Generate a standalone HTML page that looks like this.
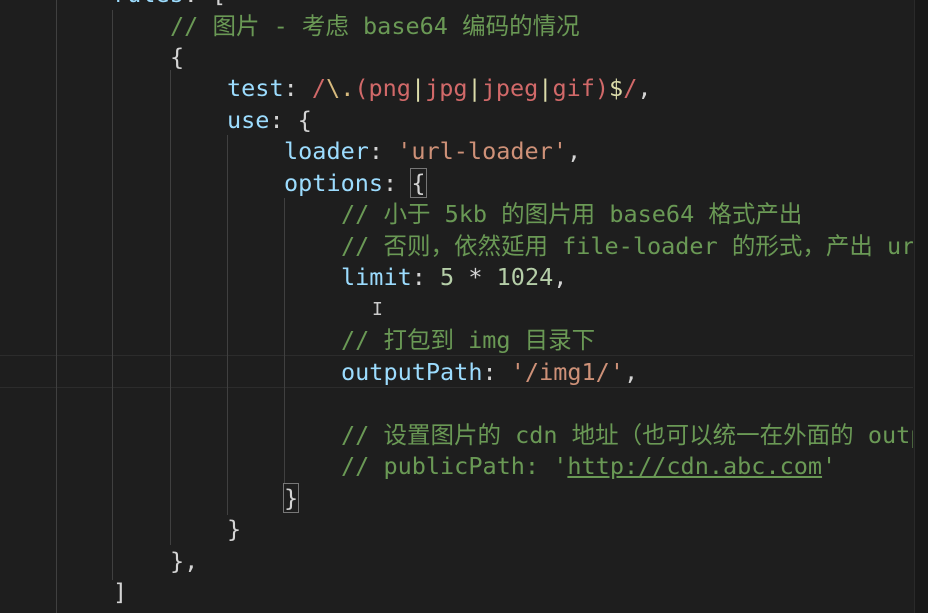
<!DOCTYPE html>
<html><head><meta charset="utf-8"><style>
html,body{margin:0;padding:0;}
body{width:928px;height:613px;background:#1e1e1e;position:relative;overflow:hidden;
font-family:"DejaVu Sans Mono","Noto Sans CJK SC",monospace;font-size:23.5px;color:#d4d4d4;}
.wrap{position:absolute;left:0;top:0;width:913px;height:613px;overflow:hidden;}
.l{position:absolute;height:31px;line-height:31px;white-space:pre;top:0;}
.c{color:#6a9955}.k{color:#9cdcfe}.s{color:#ce9178}.r{color:#d16969}.n{color:#b5cea8}.y{color:#dcdcaa}.e{color:#d7ba7d}
.g{position:absolute;width:1px;background:#404040;}
.mm{position:absolute;left:914px;top:0;width:14px;height:613px;background:#181818;border-left:1px solid #2a2a2a;}
.hl{position:absolute;left:0;width:913px;top:355px;height:31px;border-top:1px solid #2c2c2c;border-bottom:1px solid #2c2c2c;}
.bx{outline:1px solid #777;}
</style></head><body>
<div class="wrap">
<div class="hl"></div>
<div class="g" style="left:56px;top:0;height:613px"></div>
<div class="g" style="left:112px;top:10px;height:570px"></div>
<div class="g" style="left:170px;top:70px;height:475px"></div>
<div class="g" style="left:227px;top:135px;height:380px"></div>
<div class="g" style="left:284px;top:198px;height:285px"></div>
<div class="l" style="left:113px;top:-21px"><span class="k">rules</span>: [</div>
<div class="l" style="left:170px;top:11px"><span class="c">// 图片 - 考虑 base64 编码的情况</span></div>
<div class="l" style="left:170px;top:42px">{</div>
<div class="l" style="left:227px;top:73px"><span class="k">test</span>: <span class="r">/</span><span class="e">\.</span><span class="r">(png</span><span class="y">|</span><span class="r">jpg</span><span class="y">|</span><span class="r">jpeg</span><span class="y">|</span><span class="r">gif)</span><span class="y">$</span><span class="r">/</span>,</div>
<div class="l" style="left:227px;top:105px"><span class="k">use</span>: {</div>
<div class="l" style="left:284px;top:136px"><span class="k">loader</span>: <span class="s">'url-loader'</span>,</div>
<div class="l" style="left:284px;top:168px"><span class="k">options</span>: <span class="bx">{</span></div>
<div class="l" style="left:341px;top:199px"><span class="c">// 小于 5kb 的图片用 base64 格式产出</span></div>
<div class="l" style="left:341px;top:231px"><span class="c">// 否则，依然延用 file-loader 的形式，产出 url</span></div>
<div class="l" style="left:341px;top:262px"><span class="k">limit</span>: <span class="n">5</span> * <span class="n">1024</span>,</div>
<div class="l" style="left:372px;top:294px;font-size:18px;color:#ccc">I</div>
<div class="l" style="left:341px;top:325px"><span class="c">// 打包到 img 目录下</span></div>
<div class="l" style="left:341px;top:357px"><span class="k">outputPath</span>: <span class="s">'/img1/'</span>,</div>
<div class="l" style="left:341px;top:420px"><span class="c">// 设置图片的 cdn 地址（也可以统一在外面的 outputPath）</span></div>
<div class="l" style="left:341px;top:451px"><span class="c">// publicPath: '<span style="text-decoration:underline">http://cdn.abc.com</span>'</span></div>
<div class="l" style="left:284px;top:483px"><span class="bx">}</span></div>
<div class="l" style="left:227px;top:514px">}</div>
<div class="l" style="left:170px;top:546px">},</div>
<div class="l" style="left:113px;top:577px">]</div>
</div>
<div class="mm"></div>
</body></html>
